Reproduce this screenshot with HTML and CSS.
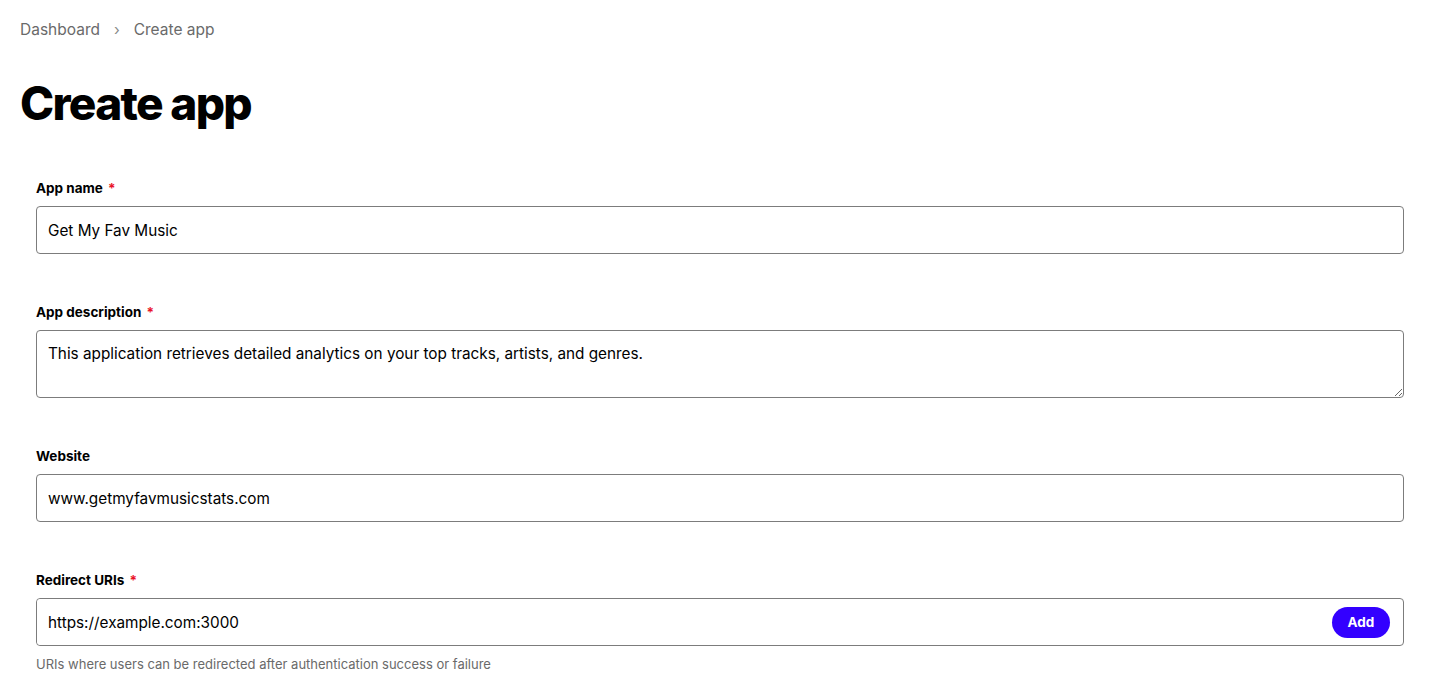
FILE: index.html
```html
<!DOCTYPE html>
<html lang="en">
<head>
  <meta charset="UTF-8" />
  <meta name="viewport" content="width=device-width, initial-scale=1" />
  <title>Create app</title>
  <link rel="stylesheet" href="styles.css">
</head>
<body>
  <div class="page">
    <nav class="crumbs">
      <a href="#">Dashboard</a>
      <span class="sep">&#8250;</span>
      <span>Create app</span>
    </nav>

    <h1>Create app</h1>

    <form class="appForm">
      <div class="field">
        <label for="appName">App name <span class="req">*</span></label>
        <input type="text" id="appName" value="Get My Fav Music" />
      </div>

      <div class="field">
        <label for="appDesc">App description <span class="req">*</span></label>
        <textarea id="appDesc">This application retrieves detailed analytics on your top tracks, artists, and genres.</textarea>
      </div>

      <div class="field">
        <label for="website">Website</label>
        <input type="text" id="website" value="www.getmyfavmusicstats.com" />
      </div>

      <div class="field">
        <label for="redirect">Redirect URIs <span class="req">*</span></label>
        <div class="uriBox">
          <input type="text" id="redirect" value="https://example.com:3000" />
          <button type="button" class="addBtn">Add</button>
        </div>
        <p class="hint">URIs where users can be redirected after authentication success or failure</p>
      </div>
    </form>
  </div>
</body>
</html>
```

FILE: styles.css
```css
html, body {
  margin: 0;
  background-color: #fff;
  color: #000;
  font-family: "Inter", "Noto Sans", sans-serif;
}

.page {
  padding: 20px 27px 0 20px;
}

.crumbs {
  font-size: 15.5px;
  line-height: 20px;
  color: #6a6a6a;
  display: flex;
  align-items: center;
  gap: 14px;
}

.crumbs a {
  color: #6a6a6a;
  text-decoration: none;
}

.crumbs .sep {
  font-size: 15px;
  color: #8a8a8a;
}

h1 {
  font-size: 46px;
  font-weight: 800;
  letter-spacing: -1.7px;
  line-height: 60px;
  margin: 33px 0 47px 0;
}

.appForm {
  padding: 0 0 0 16px;
}

.field {
  display: flex;
  flex-direction: column;
  margin-bottom: 50px;
}

label {
  font-size: 13.5px;
  font-weight: 700;
  line-height: 16px;
  margin-bottom: 10px;
}

.req {
  color: #e91429;
  margin-left: 2px;
}

input, textarea {
  font-family: inherit;
  font-size: 15.3px;
  color: #000;
  border: 1px solid #7c7c7c;
  border-radius: 4px;
  box-sizing: border-box;
  background: #fff;
  outline: none;
}

input {
  height: 48px;
  padding: 0 11px;
}

textarea {
  height: 68px;
  padding: 13px 11px;
  line-height: 20px;
  resize: vertical;
}

.uriBox {
  display: flex;
  align-items: center;
  height: 48px;
  border: 1px solid #7c7c7c;
  border-radius: 4px;
  box-sizing: border-box;
  padding-right: 13px;
}

.uriBox input {
  flex: 1;
  border: none;
  height: 46px;
}

.addBtn {
  background-color: #3300ff;
  color: #fff;
  font-family: inherit;
  font-weight: 700;
  font-size: 13.5px;
  border: none;
  border-radius: 999px;
  width: 58px;
  height: 31px;
  cursor: pointer;
}

.hint {
  margin: 8px 0 0 0;
  font-size: 13px;
  line-height: 20px;
  color: #6a6a6a;
}
```
